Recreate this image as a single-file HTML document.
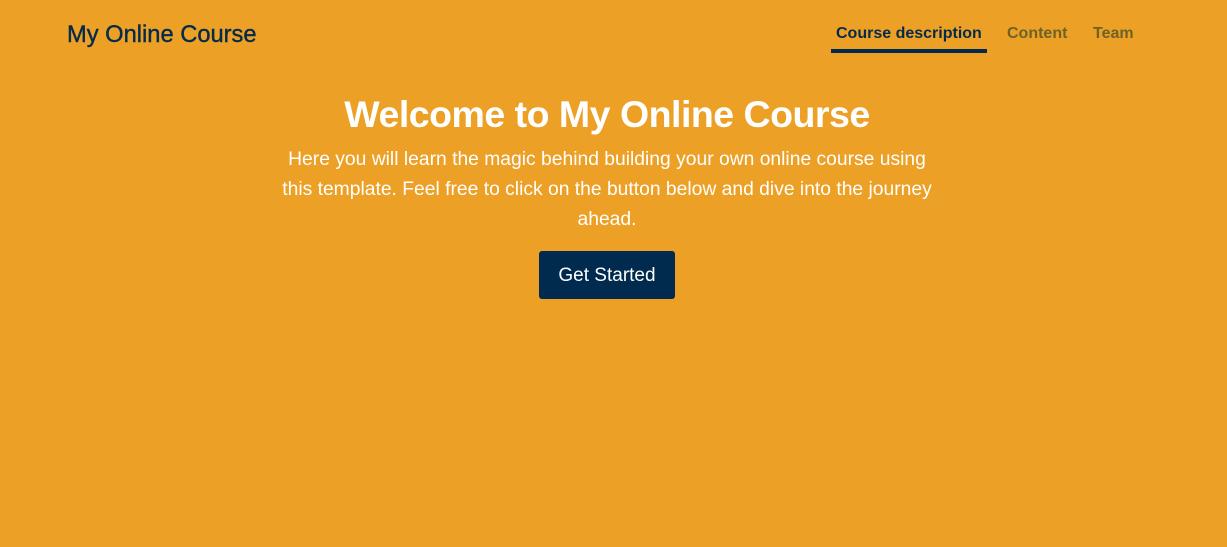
<!DOCTYPE html>
<html><head><style>
body{margin:0;width:1227px;height:547px;background:#eca025;font-family:"Liberation Sans",Arial,sans-serif;position:relative;overflow:hidden}
.a{position:absolute;white-space:nowrap}
.logo{left:67px;top:22px;font-size:23.7px;color:#062b4a;-webkit-text-stroke:0.4px #062b4a}
.nav{top:25px;font-size:16px;font-weight:bold}
.ul{position:absolute;left:831px;top:49px;width:156px;height:4px;background:#002a4e}
h1{position:absolute;left:0;width:1214px;text-align:center;top:93px;margin:0;font-size:37.5px;color:#fff;font-weight:bold;letter-spacing:-0.5px}
p{position:absolute;left:278px;width:658px;top:145px;margin:0;text-align:center;color:#fff;font-size:19.3px;line-height:30px}
.btn{left:539px;top:251px;width:136px;height:48px;background:#002a4e;border-radius:3px;color:#fff;font-size:19px;text-align:center;line-height:49px}
</style></head><body>
<div class="a logo">My Online Course</div>
<div class="a nav" style="left:836px;color:#062b4a">Course description</div>
<div class="a nav" style="left:1007px;color:#6e6226">Content</div>
<div class="a nav" style="left:1093px;color:#6e6226">Team</div>
<div class="ul"></div>
<h1>Welcome to My Online Course</h1>
<p>Here you will learn the magic behind building your own online course using this template. Feel free to click on the button below and dive into the journey ahead.</p>
<div class="a btn">Get Started</div>
</body></html>
